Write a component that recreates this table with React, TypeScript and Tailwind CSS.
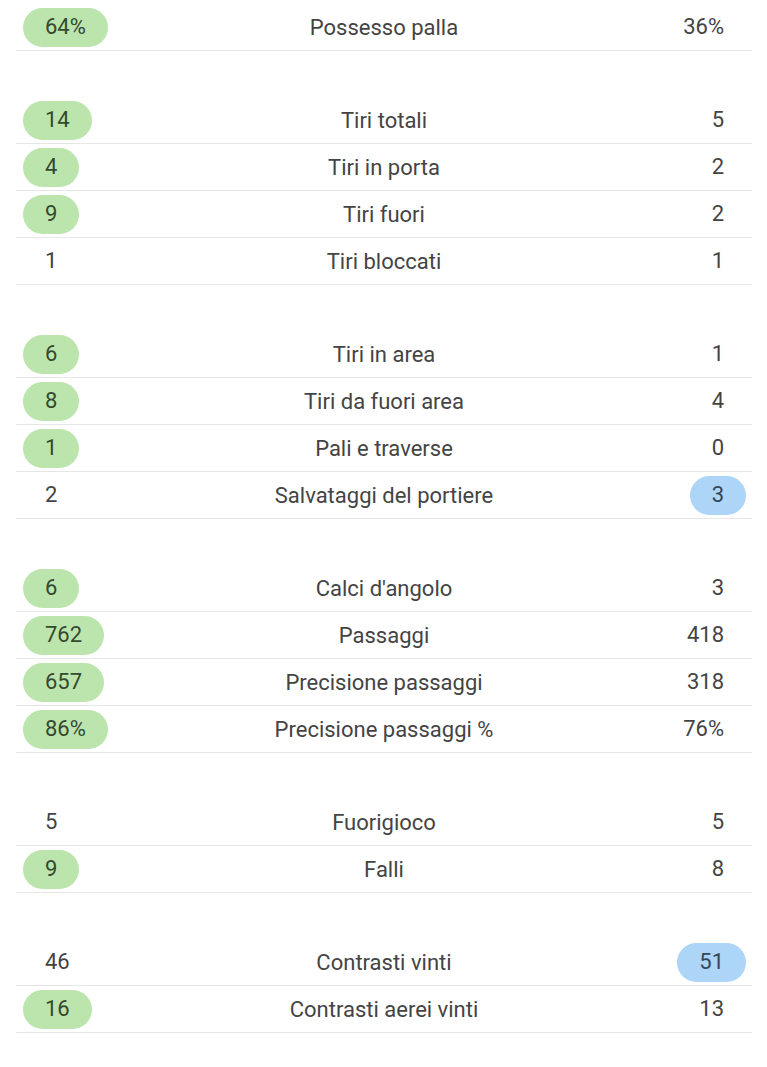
import React from "react";

type Row = { l: string; label: string; r: string; win?: "l" | "r" };

const sections: Row[][] = [
  [{ l: "64%", label: "Possesso palla", r: "36%", win: "l" }],
  [
    { l: "14", label: "Tiri totali", r: "5", win: "l" },
    { l: "4", label: "Tiri in porta", r: "2", win: "l" },
    { l: "9", label: "Tiri fuori", r: "2", win: "l" },
    { l: "1", label: "Tiri bloccati", r: "1" },
  ],
  [
    { l: "6", label: "Tiri in area", r: "1", win: "l" },
    { l: "8", label: "Tiri da fuori area", r: "4", win: "l" },
    { l: "1", label: "Pali e traverse", r: "0", win: "l" },
    { l: "2", label: "Salvataggi del portiere", r: "3", win: "r" },
  ],
  [
    { l: "6", label: "Calci d'angolo", r: "3", win: "l" },
    { l: "762", label: "Passaggi", r: "418", win: "l" },
    { l: "657", label: "Precisione passaggi", r: "318", win: "l" },
    { l: "86%", label: "Precisione passaggi %", r: "76%", win: "l" },
  ],
  [
    { l: "5", label: "Fuorigioco", r: "5" },
    { l: "9", label: "Falli", r: "8", win: "l" },
  ],
  [
    { l: "46", label: "Contrasti vinti", r: "51", win: "r" },
    { l: "16", label: "Contrasti aerei vinti", r: "13", win: "l" },
  ],
];

function Value({ v, hl }: { v: string; hl?: "green" | "blue" }) {
  const bg =
    hl === "green"
      ? "bg-[#bce5ad] text-[#34492f]"
      : hl === "blue"
      ? "bg-[#acd5f8] text-[#33475a]"
      : "bg-transparent text-[#444444]";
  return (
    <span
      className={`inline-flex h-[39px] items-center rounded-full px-[22px] leading-none ${bg}`}
    >
      {v}
    </span>
  );
}

export default function App() {
  return (
    <div
      className="min-h-[1067px] w-full bg-white pt-[4px]"
      style={{ fontFamily: "Roboto, 'Noto Sans', sans-serif" }}
    >
      <div className="ml-[16px] mr-[15px] flex flex-col gap-[46px]">
        {sections.map((sec, i) => (
          <div key={i} className="flex flex-col">
            {sec.map((row, j) => (
              <div
                key={j}
                className="grid h-[47px] grid-cols-[1fr_auto_1fr] items-center border-b border-[#e6e6e6] text-[22px] text-[#444444]"
              >
                <div className="flex justify-start pl-[7px]">
                  <Value v={row.l} hl={row.win === "l" ? "green" : undefined} />
                </div>
                <div className="text-center">{row.label}</div>
                <div className="flex justify-end pr-[6px]">
                  <Value v={row.r} hl={row.win === "r" ? "blue" : undefined} />
                </div>
              </div>
            ))}
          </div>
        ))}
      </div>
    </div>
  );
}
